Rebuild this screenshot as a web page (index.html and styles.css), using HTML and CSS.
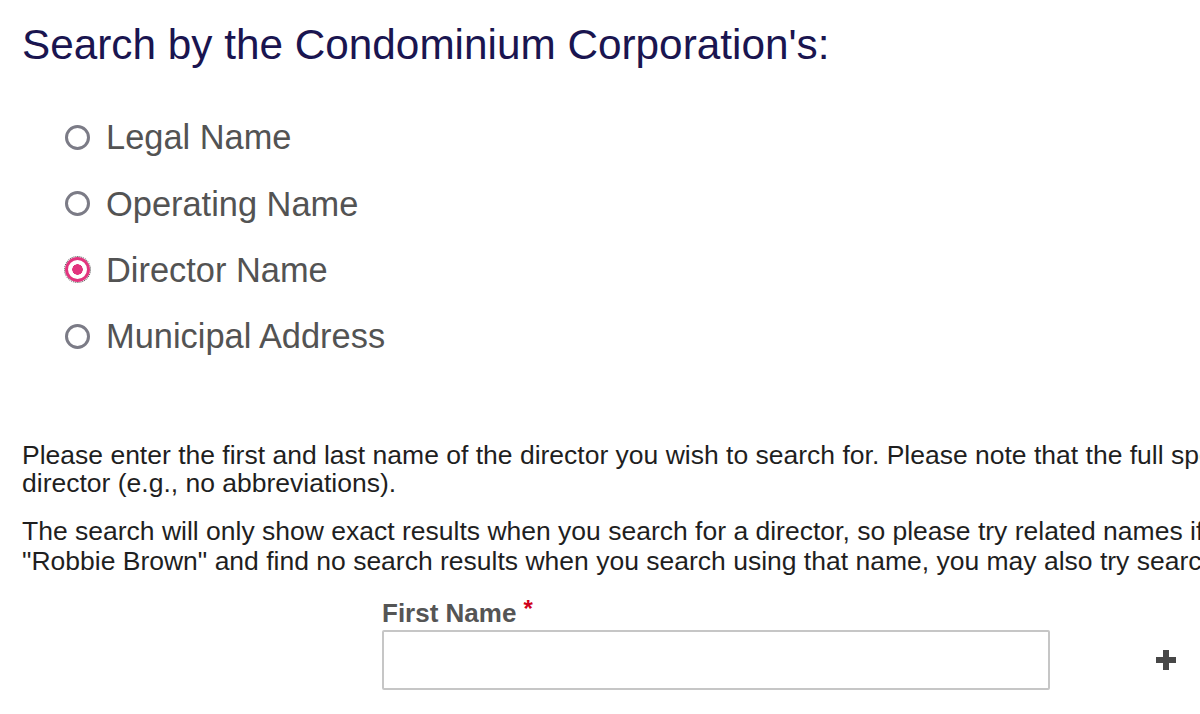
FILE: index.html
```html
<!DOCTYPE html>
<html lang="en">
<head>
<meta charset="utf-8">
<title>Condominium Corporation Search</title>
<link rel="stylesheet" href="styles.css">
</head>
<body>
<main class="search-page">
  <h1 class="search-title">Search by the Condominium Corporation's:</h1>

  <ul class="search-options">
    <li class="option"><span class="radio"></span><span class="option-label">Legal Name</span></li>
    <li class="option"><span class="radio"></span><span class="option-label">Operating Name</span></li>
    <li class="option"><span class="radio radio-checked"></span><span class="option-label">Director Name</span></li>
    <li class="option"><span class="radio"></span><span class="option-label">Municipal Address</span></li>
  </ul>

  <p class="help-text">Please enter the first and last name of the director you wish to search for. Please note that the full spelling of the name must be entered for the<br>director (e.g., no abbreviations).</p>
  <p class="help-text help-text-second">The search will only show exact results when you search for a director, so please try related names if needed. For example, if you search for<br>"Robbie Brown" and find no search results when you search using that name, you may also try searching for "Robert Brown".</p>

  <div class="field-row">
    <div class="field">
      <label class="field-label" for="first-name">First Name <span class="required">*</span></label>
      <input class="field-input" id="first-name" type="text">
    </div>
    <span class="add-button">
      <svg width="20" height="20" viewBox="0 0 20 20" aria-hidden="true"><path d="M7 0h6v7h7v6h-7v7h-6v-7h-7v-6h7z" fill="#474747"/></svg>
    </span>
  </div>
</main>
</body>
</html>
```
FILE: styles.css
```css
html, body {
  margin: 0;
  padding: 0;
  background: #ffffff;
}

body {
  overflow: hidden;
  font-family: "Liberation Sans", Arial, sans-serif;
}

.search-page {
  padding-left: 22px;
  width: 1600px;
}

.search-title {
  margin: 21px 0 0;
  font-size: 42.3px;
  font-weight: normal;
  line-height: 48px;
  color: #1a1550;
}

.search-options {
  list-style: none;
  margin: 35px 0 0;
  padding: 0 0 0 43px;
}

.option {
  display: flex;
  align-items: center;
  height: 66.4px;
}

.radio {
  box-sizing: border-box;
  width: 25px;
  height: 25px;
  border: 3px solid #7b7b86;
  border-radius: 50%;
  margin-right: 16px;
  flex: none;
}

.radio-checked {
  border: 3px solid #e2347e;
  background: radial-gradient(circle, #e2347e 0 5px, #ffffff 5.5px);
  outline: 1px dotted #555;
  outline-offset: 0;
}

.option-label {
  font-size: 34.4px;
  line-height: 40px;
  color: #535353;
}

.help-text {
  margin: 71px 0 0;
  font-size: 26.5px;
  line-height: 28px;
  color: #1f1f1f;
  white-space: nowrap;
}

.help-text-second {
  margin-top: 19px;
  line-height: 30px;
}

.field-row {
  display: flex;
  align-items: flex-end;
  margin-top: 18px;
  padding-left: 360px;
}

.field {
  display: flex;
  flex-direction: column;
  gap: 2px;
}

.field-label {
  font-size: 26px;
  font-weight: bold;
  line-height: 30px;
  color: #555555;
}

.required {
  color: #d0021b;
  font-size: 24px;
  vertical-align: 5px;
}

.field-input {
  box-sizing: border-box;
  width: 668px;
  height: 60px;
  margin: 0;
  border: 2px solid #c6c6c6;
  border-radius: 2px;
  background: #ffffff;
}

.add-button {
  display: flex;
  align-items: center;
  justify-content: center;
  height: 60px;
  margin-left: 106px;
}
```
